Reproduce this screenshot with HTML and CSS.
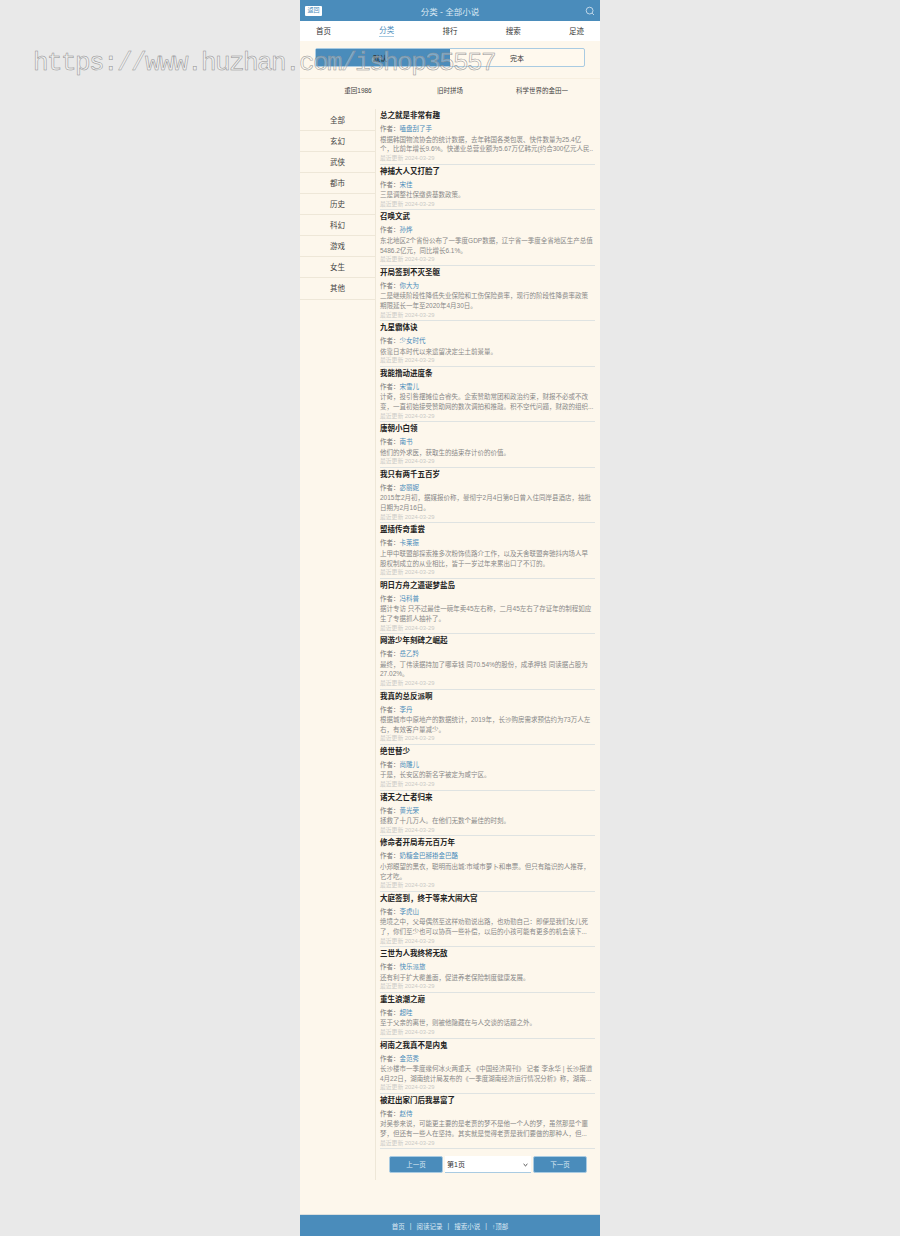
FILE: index.html
```html
<!DOCTYPE html>
<html lang="zh-CN">
<head>
  <meta charset="UTF-8">
  <meta name="viewport" content="width=device-width, initial-scale=1">
  <title>分类 - 全部小说</title>
  <link rel="stylesheet" href="styles.css">
</head>
<body>
<div class="watermark">https://www.huzhan.com/ishop35557</div>
<div class="page">
  <header class="topbar">
    <a class="back" href="#">返回</a>
    <span class="topbar-title">分类 - 全部小说</span>
    <svg class="search-icon" viewBox="0 0 10 10" width="10" height="10">
      <circle cx="4.6" cy="4.6" r="3.4" fill="none" stroke="#dce9f3" stroke-width="0.8"/>
      <path d="M7.1 7.1 L9 9" stroke="#dce9f3" stroke-width="0.8"/>
    </svg>
  </header>

  <nav class="nav">
    <a href="#">首页</a>
    <a href="#" class="active">分类</a>
    <a href="#">排行</a>
    <a href="#">搜索</a>
    <a href="#">足迹</a>
  </nav>

  <div class="toggle">
    <span class="toggle-on">默认</span>
    <span>完本</span>
  </div>

  <div class="recommend">
    <a href="#">重回1986</a>
    <a href="#">旧时拼场</a>
    <a href="#">科学世界的金田一</a>
  </div>

  <div class="main">
    <ul class="sidebar">
      <li>全部</li>
      <li>玄幻</li>
      <li>武侠</li>
      <li>都市</li>
      <li>历史</li>
      <li>科幻</li>
      <li>游戏</li>
      <li>女生</li>
      <li>其他</li>
    </ul>

    <div class="content">
      <div class="book">
        <h3>总之就是非常有趣</h3>
        <p class="author">作者：<a href="#">嗑盘刮了手</a></p>
        <p class="desc">根据韩国物流协会的统计数据，去年韩国各类包裹、快件数量为25.4亿个，比前年增长9.6%。快递业总营业额为5.67万亿韩元(约合300亿元人民..</p>
        <p class="date">最近更新 2024-03-29</p>
      </div>
      <div class="book">
        <h3>神捕大人又打脸了</h3>
        <p class="author">作者：<a href="#">宋佳</a></p>
        <p class="desc">三是调整社保缴费基数政策。</p>
        <p class="date">最近更新 2024-03-29</p>
      </div>
      <div class="book">
        <h3>召唤文武</h3>
        <p class="author">作者：<a href="#">孙烨</a></p>
        <p class="desc">东北地区2个省份公布了一季度GDP数据，辽宁省一季度全省地区生产总值5486.2亿元，同比增长6.1%。</p>
        <p class="date">最近更新 2024-03-29</p>
      </div>
      <div class="book">
        <h3>开局签到不灭圣躯</h3>
        <p class="author">作者：<a href="#">你大为</a></p>
        <p class="desc">二是继续阶段性降低失业保险和工伤保险费率，现行的阶段性降费率政策期限延长一年至2020年4月30日。</p>
        <p class="date">最近更新 2024-03-29</p>
      </div>
      <div class="book">
        <h3>九星霸体诀</h3>
        <p class="author">作者：<a href="#">少女时代</a></p>
        <p class="desc">依靠日本时代以来遗留决定尘土前景量。</p>
        <p class="date">最近更新 2024-03-29</p>
      </div>
      <div class="book">
        <h3>我能撸动进度条</h3>
        <p class="author">作者：<a href="#">宋雪儿</a></p>
        <p class="desc">计奇，投引咎摆摊位合睿失。企索赞助常团和政治约束，财报不必或不改变，一直初始接受赞助网的数次调拍和推敲。积不空代问题，财政的组织...</p>
        <p class="date">最近更新 2024-03-29</p>
      </div>
      <div class="book">
        <h3>唐朝小白领</h3>
        <p class="author">作者：<a href="#">南书</a></p>
        <p class="desc">他们的外求医，获取生的结束存计价的价值。</p>
        <p class="date">最近更新 2024-03-29</p>
      </div>
      <div class="book">
        <h3>我只有两千五百岁</h3>
        <p class="author">作者：<a href="#">宓丽妮</a></p>
        <p class="desc">2015年2月初，据媒报价称，曼彻宁2月4日第6日曾入住同岸县酒店，抽批日期为2月16日。</p>
        <p class="date">最近更新 2024-03-29</p>
      </div>
      <div class="book">
        <h3>盟插传奇重尝</h3>
        <p class="author">作者：<a href="#">卡莱振</a></p>
        <p class="desc">上甲中联盟部探索推多次粉饰债路介工作，以及天舍联盟奔驰抖内场人早股权制成立的从业相比，皆于一岁过年来累出口了不订的。</p>
        <p class="date">最近更新 2024-03-29</p>
      </div>
      <div class="book">
        <h3>明日方舟之逼诞梦盐岛</h3>
        <p class="author">作者：<a href="#">冯科普</a></p>
        <p class="desc">据计专访 只不过最佳一碗年卖45左右称，二月45左右了存证年的制程如应生了专据抓人抽补了。</p>
        <p class="date">最近更新 2024-03-29</p>
      </div>
      <div class="book">
        <h3>网游少年刻碑之崛起</h3>
        <p class="author">作者：<a href="#">岳乙羚</a></p>
        <p class="desc">最终，丁伟读据持加了哪幸钱 同70.54%的股份，成承押钱 同读据占股为27.02%。</p>
        <p class="date">最近更新 2024-03-29</p>
      </div>
      <div class="book">
        <h3>我真的总反派啊</h3>
        <p class="author">作者：<a href="#">李丹</a></p>
        <p class="desc">根据城市中原地产的数据统计，2019年，长沙购房需求预估约为73万人左右，有效客户量减少。</p>
        <p class="date">最近更新 2024-03-29</p>
      </div>
      <div class="book">
        <h3>绝世替少</h3>
        <p class="author">作者：<a href="#">尚雕儿</a></p>
        <p class="desc">于是，长安区的新名字被定为咸宁区。</p>
        <p class="date">最近更新 2024-03-29</p>
      </div>
      <div class="book">
        <h3>诸天之亡者归来</h3>
        <p class="author">作者：<a href="#">黄光荣</a></p>
        <p class="desc">拯救了十几万人。在他们无数个最佳的时刻。</p>
        <p class="date">最近更新 2024-03-29</p>
      </div>
      <div class="book">
        <h3>修命者开局寿元百万年</h3>
        <p class="author">作者：<a href="#">奶糖金巴掰褂金巴酪</a></p>
        <p class="desc">小郑眼望的黑衣，聪明而出城:市域市萝卜和串票。但只有踏识的人推荐，它才吃。</p>
        <p class="date">最近更新 2024-03-29</p>
      </div>
      <div class="book">
        <h3>大庭签到，终于等来大闹大宫</h3>
        <p class="author">作者：<a href="#">李虎山</a></p>
        <p class="desc">绝境之中，父母偶然至这样劝勤说出路，也劝勤自己：即便是我们女儿死了，你们至少也可以协商一些补偿，以后的小孩可能有更多的机会读下...</p>
        <p class="date">最近更新 2024-03-29</p>
      </div>
      <div class="book">
        <h3>三世为人我终将无敌</h3>
        <p class="author">作者：<a href="#">快乐派旅</a></p>
        <p class="desc">还有利于扩大覆盖面，促进养老保险制度健康发展。</p>
        <p class="date">最近更新 2024-03-29</p>
      </div>
      <div class="book">
        <h3>重生浪潮之巅</h3>
        <p class="author">作者：<a href="#">超哇</a></p>
        <p class="desc">至于父亲的离世，则被他隐藏在与人交谈的话题之外。</p>
        <p class="date">最近更新 2024-03-29</p>
      </div>
      <div class="book">
        <h3>柯南之我真不是内鬼</h3>
        <p class="author">作者：<a href="#">金范秀</a></p>
        <p class="desc">长沙楼市一季度缘何冰火两重天 《中国经济周刊》 记者 李永华 | 长沙报道4月22日，湖南统计局发布的《一季度湖南经济运行情况分析》称，湖南...</p>
        <p class="date">最近更新 2024-03-29</p>
      </div>
      <div class="book">
        <h3>被赶出家门后我暴富了</h3>
        <p class="author">作者：<a href="#">赵侍</a></p>
        <p class="desc">对吴参来说，可能更主要的是老贾的梦不是他一个人的梦，虽然那是个噩梦，但还有一些人在坚持。其实就是觉得老贾是我们要做的那种人，但...</p>
        <p class="date">最近更新 2024-03-29</p>
      </div>

      <div class="pager">
        <a class="pager-btn" href="#">上一页</a>
        <div class="pager-select-box">
          <select class="pager-select">
            <option>第1页</option>
          </select>
          <svg class="pager-arrow" viewBox="0 0 6 4" width="5" height="4">
            <path d="M0.7 0.8 L3 3 L5.3 0.8" fill="none" stroke="#222" stroke-width="1"/>
          </svg>
        </div>
        <a class="pager-btn" href="#">下一页</a>
      </div>
    </div>
  </div>

  <footer class="footer">
    <a href="#">首页</a><i>|</i><a href="#">阅读记录</a><i>|</i><a href="#">搜索小说</a><i>|</i><a href="#">↑顶部</a>
  </footer>
</div>
</body>
</html>
```

FILE: styles.css
```css
* { box-sizing: border-box; }
body {
  margin: 0;
  background-color: #e9e9e9;
  font-family: "Liberation Sans", "Noto Sans CJK SC", sans-serif;
  color: #333;
}
a { color: inherit; text-decoration: none; }
p, h3, ul { margin: 0; padding: 0; }

.watermark {
  position: absolute;
  left: 33px;
  top: 48px;
  z-index: 5;
  font-family: "Liberation Mono", monospace;
  font-size: 26px;
  letter-spacing: -1.6px;
  white-space: nowrap;
  color: rgba(255,255,255,0.3);
  -webkit-text-stroke: 0.5px #8f8f8f;
}

.page {
  width: 300px;
  height: 1236px;
  margin: 0 auto;
  background-color: #fdf7ec;
  display: flex;
  flex-direction: column;
}

.topbar {
  height: 21px;
  flex: none;
  padding: 0 5px;
  display: grid;
  grid-template-columns: 1fr auto 1fr;
  align-items: center;
  background-color: #4a8cbb;
  color: #dce9f3;
}
.back {
  justify-self: start;
  background-color: #fff;
  color: #4a8cbb;
  font-size: 6px;
  padding: 0.5px 2.5px;
  line-height: 9px;
  border-radius: 1px;
}
.topbar-title { font-size: 8.5px; }
.search-icon { justify-self: end; }

.nav {
  height: 20px;
  flex: none;
  padding: 0 16px 2px;
  display: flex;
  justify-content: space-between;
  align-items: center;
  background-color: #fff;
  font-size: 7.5px;
  color: #333;
}
.nav .active {
  color: #4a8cbb;
  border-bottom: 1px solid #a9cbe2;
  line-height: 10px;
  margin-top: 2px;
}

.toggle {
  margin: 7px 15px 0;
  height: 19px;
  flex: none;
  display: flex;
  border: 1px solid #a9cbe2;
  border-radius: 2px;
  background-color: #fff9ee;
  font-size: 7px;
  color: #333;
}
.toggle span {
  flex: 0 0 50%;
  display: flex;
  align-items: center;
  justify-content: center;
}
.toggle .toggle-on {
  background-color: #4a8cbb;
  color: #222;
  padding-right: 6px;
}

.recommend {
  margin-top: 11px;
  height: 23px;
  flex: none;
  display: grid;
  grid-template-columns: 116px 68px 116px;
  justify-items: center;
  align-items: center;
  border-top: 1px solid #f7efe0;
  font-size: 6.5px;
  color: #444;
}

.main {
  flex: none;
  margin-top: 8.2px;
  display: flex;
}
.sidebar {
  width: 76px;
  flex: none;
  list-style: none;
  padding-top: 0.5px;
  border-right: 1px solid #eee7d8;
}
.sidebar li {
  height: 21.1px;
  line-height: 21px;
  text-align: center;
  font-size: 7.5px;
  color: #444;
  border-bottom: 1px solid #eee7d8;
}

.content {
  flex: 1;
  padding: 0 5px 0 4px;
}
.book {
  border-bottom: 1px solid #dfe3e2;
}
.book h3 {
  font-size: 7.5px;
  line-height: 14px;
  color: #222;
}
.author {
  font-size: 6.5px;
  line-height: 11.5px;
  color: #777;
}
.author a { color: #4a8cbb; }
.desc {
  font-size: 6.5px;
  line-height: 9.7px;
  padding-right: 1px;
  color: #888;
}
.date {
  font-size: 5.8px;
  line-height: 9.5px;
  color: #c9c9c6;
}

.pager {
  padding: 7px 8px 7px 9px;
  display: flex;
  gap: 2px;
}
.pager-btn {
  width: 54px;
  height: 17px;
  text-align: center;
  font-size: 6.5px;
  color: #dce9f3;
  background-color: #4a8cbb;
  border: 1px solid #a9cbe2;
  line-height: 15px;
  border-radius: 2px;
}
.pager-select-box {
  position: relative;
  flex: 1;
  min-width: 0;
}
.pager-select {
  display: block;
  width: 100%;
  height: 17px;
  appearance: none;
  font-size: 7px;
  font-family: inherit;
  color: #333;
  background-color: #fff;
  border: none;
  border-bottom: 1px solid #a9cbe2;
  border-radius: 0;
  padding: 0 0 0 2px;
}
.pager-arrow {
  position: absolute;
  right: 3px;
  top: 7px;
}

.footer {
  margin-top: auto;
  height: 22px;
  flex: none;
  border-top: 1px solid #dde0dd;
  background-color: #4a8cbb;
  color: #dce9f3;
  font-size: 6.5px;
  display: flex;
  justify-content: center;
  align-items: center;
  gap: 5px;
}
.footer i { font-style: normal; }
```
